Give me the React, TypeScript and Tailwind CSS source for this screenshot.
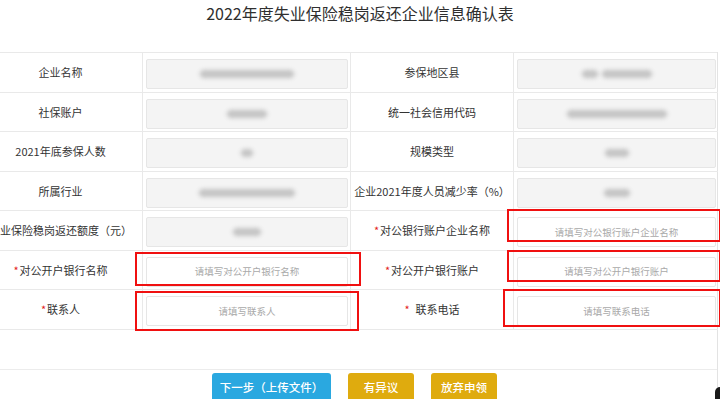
import React from "react";

type Cell =
  | { kind: "label"; text: string; req?: boolean; gap?: boolean }
  | { kind: "value"; blobs: number[] }
  | { kind: "input"; placeholder: string };

const rows: Cell[][] = [
  [
    { kind: "label", text: "企业名称" },
    { kind: "value", blobs: [94] },
    { kind: "label", text: "参保地区县" },
    { kind: "value", blobs: [16, 50] },
  ],
  [
    { kind: "label", text: "社保账户" },
    { kind: "value", blobs: [40] },
    { kind: "label", text: "统一社会信用代码" },
    { kind: "value", blobs: [100] },
  ],
  [
    { kind: "label", text: "2021年底参保人数" },
    { kind: "value", blobs: [12] },
    { kind: "label", text: "规模类型" },
    { kind: "value", blobs: [24] },
  ],
  [
    { kind: "label", text: "所属行业" },
    { kind: "value", blobs: [96] },
    { kind: "label", text: "企业2021年度人员减少率（%）" },
    { kind: "value", blobs: [26] },
  ],
  [
    { kind: "label", text: "失业保险稳岗返还额度（元）" },
    { kind: "value", blobs: [28] },
    { kind: "label", text: "对公银行账户企业名称", req: true },
    { kind: "input", placeholder: "请填写对公银行账户企业名称" },
  ],
  [
    { kind: "label", text: "对公开户银行名称", req: true },
    { kind: "input", placeholder: "请填写对公开户银行名称" },
    { kind: "label", text: "对公开户银行账户", req: true },
    { kind: "input", placeholder: "请填写对公开户银行账户" },
  ],
  [
    { kind: "label", text: "联系人", req: true },
    { kind: "input", placeholder: "请填写联系人" },
    { kind: "label", text: "联系电话", req: true, gap: true },
    { kind: "input", placeholder: "请填写联系电话" },
  ],
];

// red annotation boxes drawn over the screenshot
const marks = [
  "left-[135px] top-[252px] w-[226px] h-[34px]",
  "left-[135px] top-[291px] w-[224px] h-[40px]",
  "left-[507px] top-[209px] w-[214px] h-[33px]",
  "left-[507px] top-[250px] w-[214px] h-[32px]",
  "left-[503px] top-[289px] w-[218px] h-[38px]",
];

function TableCell({ cell, col }: { cell: Cell; col: number }) {
  const edge = col > 0 ? "border-l border-[#e9e9e9]" : "";
  if (cell.kind === "label") {
    return (
      <div className={`h-[39.5px] border-b border-[#e9e9e9] flex items-center justify-center whitespace-nowrap text-[11px] text-[#333] ${edge}`}>
        {cell.req && <span className="text-[#e31b1b] mr-[1px]">*</span>}
        {cell.gap && <span className="w-[5px]" />}
        {cell.text}
      </div>
    );
  }
  const boxBase = "w-full h-[30px] rounded-[2px] border border-[#e6e6e6] flex items-center justify-center gap-[4px]";
  return (
    <div className={`h-[39.5px] border-b border-[#e9e9e9] pl-[3px] pr-[2px] pt-[6px] ${edge}`}>
      {cell.kind === "value" ? (
        <div className={`${boxBase} bg-[#f4f4f4]`}>
          {cell.blobs.map((w, i) => (
            <span key={i} className="h-[8px] bg-[#c4c4c4] blur-[2px] rounded-sm" style={{ width: w }} />
          ))}
        </div>
      ) : (
        <div className={`${boxBase} bg-white text-[9.5px] text-[#a9a9a9]`}>{cell.placeholder}</div>
      )}
    </div>
  );
}

export default function App() {
  return (
    <div
      className="relative w-[720px] h-[399px] overflow-hidden bg-white"
      style={{ fontFamily: '"Noto Sans CJK SC", "Noto Sans", sans-serif' }}
    >
      <div className="h-[52px] pt-[3px] text-center text-[16px] leading-[20px] text-[#2f2f2f]">
        2022年度失业保险稳岗返还企业信息确认表
      </div>

      <div className="ml-[-21px] w-[739px] border-r border-[#e3e3e3]">
        <div className="grid grid-cols-[163px_208px_163px_205px] border-t border-[#e9e9e9]">
          {rows.map((row, r) =>
            row.map((cell, c) => <TableCell key={`${r}-${c}`} cell={cell} col={c} />)
          )}
        </div>
        <div className="h-[40px] border-b border-[#ececec]" />
        <div className="flex gap-[17px] pl-[233px] pt-[3px] h-[40px]">
          <button className="w-[119px] h-[30px] rounded-[3px] bg-[#2aa8e0] text-white text-[11.5px] font-medium">
            下一步（上传文件）
          </button>
          <button className="w-[66px] h-[30px] rounded-[3px] bg-[#dfab0e] text-white text-[11.5px] font-medium">
            有异议
          </button>
          <button className="w-[66px] h-[30px] rounded-[3px] bg-[#dfab0e] text-white text-[11.5px] font-medium">
            放弃申领
          </button>
        </div>
      </div>

      {marks.map((m, i) => (
        <div key={i} className={`absolute border-[2.5px] border-[#f01010] ${m}`} />
      ))}

      <div className="absolute right-0 bottom-0 w-[5px] h-[12px] bg-[#1a1a1a] rounded-tl-[6px]" />
    </div>
  );
}
